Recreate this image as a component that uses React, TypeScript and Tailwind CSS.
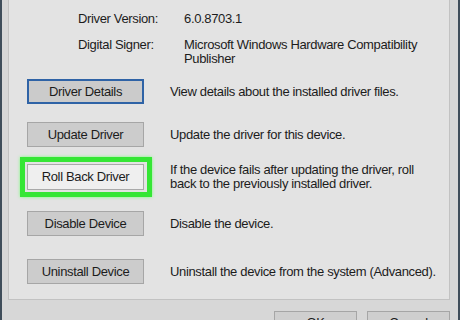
const rows = [
  { label: 'Driver Details', text: ['View details about the installed driver files.'], gap: 'mt-[13px]', kind: 'focus' },
  { label: 'Update Driver', text: ['Update the driver for this device.'], gap: 'mt-[18px]', kind: 'normal' },
  {
    label: 'Roll Back Driver',
    text: ['If the device fails after updating the driver, roll', 'back to the previously installed driver.'],
    gap: 'mt-[16px]',
    kind: 'highlight',
  },
  { label: 'Disable Device', text: ['Disable the device.'], gap: 'mt-[20px]', kind: 'normal' },
  { label: 'Uninstall Device', text: ['Uninstall the device from the system (Advanced).'], gap: 'mt-[23px]', kind: 'normal' },
];

function DlgButton({ label, kind }: { label: string; kind: string }) {
  if (kind === 'focus') {
    return (
      <div className="w-[117px] h-[25px] flex items-center justify-center border-2 border-[#2f63a6] bg-[#cbcbcb]">
        {label}
      </div>
    );
  }
  if (kind === 'highlight') {
    return (
      <div className="relative">
        <span className="absolute -top-[7px] -left-[7px] -right-[8px] -bottom-[7px] border-[5px] border-[#35e635] shadow-[0_0_3px_#7dff7d]" />
        <div className="w-[117px] h-[26px] flex items-center justify-center border border-[#a9a9a9] bg-[#efefef]">
          {label}
        </div>
      </div>
    );
  }
  return (
    <div className="w-[117px] h-[25px] flex items-center justify-center border border-[#a6a6a6] bg-[#cccccc]">
      {label}
    </div>
  );
}

export default function App() {
  return (
    <div
      className="w-[460px] h-[320px] overflow-hidden flex bg-[#d7d7d7] text-[13px] leading-[14px] tracking-[-0.35px] text-[#1c1c1c]"
      style={{ fontFamily: '"Liberation Sans", Arial, sans-serif' }}
    >
      <div className="w-[2px] bg-[#3f4d5a]" />
      <div className="flex-1 flex flex-col pl-[6px] pr-[8px]">
        <div className="h-[300px] shrink-0 bg-[#e3e3e3] border-x border-b border-[#c2c2c2] pt-[12px] flex flex-col">
          <div className="flex pl-[69px]">
            <div className="w-[106px]">Driver Version:</div>
            <div>6.0.8703.1</div>
          </div>
          <div className="flex pl-[69px] mt-[12px]">
            <div className="w-[106px]">Digital Signer:</div>
            <div>
              <div>Microsoft Windows Hardware Compatibility</div>
              <div>Publisher</div>
            </div>
          </div>
          {rows.map((r) => (
            <div
              key={r.label}
              className={`${r.gap} flex items-center pl-[18px] ${r.text.length > 1 ? 'h-[28px]' : 'h-[25px]'}`}
            >
              <DlgButton label={r.label} kind={r.kind} />
              <div className="ml-[26px]">
                {r.text.map((t) => (
                  <div key={t}>{t}</div>
                ))}
              </div>
            </div>
          ))}
        </div>
        <div className="mt-[11px] flex justify-end gap-[10px]">
          <div className="w-[83px] h-[24px] flex items-center justify-center border border-[#a6a6a6] bg-[#cfcfcf]">OK</div>
          <div className="w-[83px] h-[24px] flex items-center justify-center border border-[#a6a6a6] bg-[#cfcfcf]">Cancel</div>
        </div>
      </div>
      <div className="w-[2px] bg-[#3f4d5a]" />
    </div>
  );
}
